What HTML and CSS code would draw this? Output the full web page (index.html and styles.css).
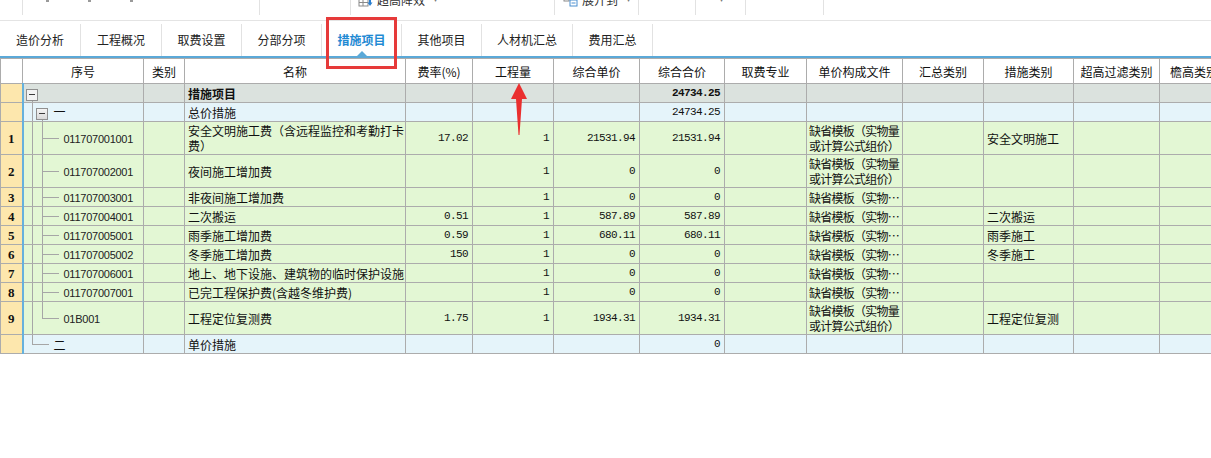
FILE: index.html
```html
<!DOCTYPE html>
<html lang="zh-CN">
<head>
<meta charset="utf-8">
<title>措施项目</title>
<link rel="stylesheet" href="styles.css">
</head>
<body>
<div class="app">
  <div class="toolbar">
    <div class="tb-seg s1"></div>
    <div class="tb-seg s2"><span class="tb-dot d1"></span><span class="tb-dot d2"></span><span class="tb-dot d3"></span></div>
    <div class="tb-seg s3"></div>
    <div class="tb-seg s4">
      <svg class="tb-icon" width="15" height="14" viewBox="0 0 15 14"><rect x="1" y="1" width="9" height="11" fill="#fff" stroke="#8a8a8a"/><path d="M1 5h9M1 8.5h9M5 1v11" stroke="#8a8a8a"/><path d="M12 1v9" stroke="#2a7fd0" stroke-width="2"/><path d="M9.5 8.5l2.5 3.5 2.5-3.5z" fill="#2a7fd0"/></svg>
      <span class="tb-text">超高降效</span><span class="tb-caret">▾</span>
    </div>
    <div class="tb-seg s5">
      <svg class="tb-icon" width="15" height="14" viewBox="0 0 15 14"><rect x="1" y="2" width="5" height="5" fill="#fff" stroke="#8a8a8a"/><rect x="7" y="6" width="7" height="6" fill="#fff" stroke="#4a8fd0"/><path d="M8.5 9h4" stroke="#4a8fd0"/></svg>
      <span class="tb-text">展开到</span><span class="tb-caret">▾</span>
    </div>
    <div class="tb-seg s6"></div>
    <div class="tb-seg s7"><span class="tb-caret">▾</span></div>
    <div class="tb-seg s8"></div>
  </div>

  <div class="tabs">
    <div class="tab t80">造价分析</div>
    <div class="tab t81">工程概况</div>
    <div class="tab t80">取费设置</div>
    <div class="tab t80">分部分项</div>
    <div class="tab t80 active">措施项目</div>
    <div class="tab t80">其他项目</div>
    <div class="tab t91">人材机汇总</div>
    <div class="tab t80">费用汇总</div>
  </div>

  <div class="grid-wrap">
    <table class="grid">
      <colgroup>
        <col class="c-rh"><col class="c-sq"><col class="c-lb"><col class="c-mc"><col class="c-fl"><col class="c-gcl"><col class="c-zhdj"><col class="c-zhhj"><col class="c-qf"><col class="c-djgc"><col class="c-hz"><col class="c-cs"><col class="c-cg"><col class="c-yg">
      </colgroup>
      <thead>
        <tr>
          <th class="rh-head"></th><th>序号</th><th>类别</th><th>名称</th><th>费率(%)</th><th>工程量</th><th>综合单价</th><th>综合合价</th><th>取费专业</th><th>单价构成文件</th><th>汇总类别</th><th>措施类别</th><th>超高过滤类别</th><th class="left">檐高类别</th>
        </tr>
      </thead>
      <tbody>
        <tr class="r-top h1">
          <td class="rh"></td>
          <td class="sq sq-top"><span class="tg tg-light"></span></td>
          <td></td><td class="mc bold">措施项目</td><td></td><td></td><td></td><td class="num bold">24734.25</td><td></td><td></td><td></td><td></td><td></td><td></td>
        </tr>
        <tr class="r-group h1">
          <td class="rh"></td>
          <td class="sq sq-g1"><span class="tg"></span><span class="grp">一</span></td>
          <td></td><td class="mc">总价措施</td><td></td><td></td><td></td><td class="num">24734.25</td><td></td><td></td><td></td><td></td><td></td><td></td>
        </tr>
        <tr class="r-item h2">
          <td class="rh">1</td>
          <td class="sq sq-item"><span class="code">011707001001</span></td>
          <td></td><td class="mc">安全文明施工费（含远程监控和考勤打卡<br>费）</td><td class="num">17.02</td><td class="num">1</td><td class="num">21531.94</td><td class="num">21531.94</td><td></td><td class="dj">缺省模板（实物量<br>或计算公式组价）</td><td></td><td class="mc">安全文明施工</td><td></td><td></td>
        </tr>
        <tr class="r-item h2">
          <td class="rh">2</td>
          <td class="sq sq-item"><span class="code">011707002001</span></td>
          <td></td><td class="mc">夜间施工增加费</td><td></td><td class="num">1</td><td class="num">0</td><td class="num">0</td><td></td><td class="dj">缺省模板（实物量<br>或计算公式组价）</td><td></td><td></td><td></td><td></td>
        </tr>
        <tr class="r-item h1">
          <td class="rh">3</td>
          <td class="sq sq-item"><span class="code">011707003001</span></td>
          <td></td><td class="mc">非夜间施工增加费</td><td></td><td class="num">1</td><td class="num">0</td><td class="num">0</td><td></td><td class="dj">缺省模板（实物…</td><td></td><td></td><td></td><td></td>
        </tr>
        <tr class="r-item h1">
          <td class="rh">4</td>
          <td class="sq sq-item"><span class="code">011707004001</span></td>
          <td></td><td class="mc">二次搬运</td><td class="num">0.51</td><td class="num">1</td><td class="num">587.89</td><td class="num">587.89</td><td></td><td class="dj">缺省模板（实物…</td><td></td><td class="mc">二次搬运</td><td></td><td></td>
        </tr>
        <tr class="r-item h1">
          <td class="rh">5</td>
          <td class="sq sq-item"><span class="code">011707005001</span></td>
          <td></td><td class="mc">雨季施工增加费</td><td class="num">0.59</td><td class="num">1</td><td class="num">680.11</td><td class="num">680.11</td><td></td><td class="dj">缺省模板（实物…</td><td></td><td class="mc">雨季施工</td><td></td><td></td>
        </tr>
        <tr class="r-item h1">
          <td class="rh">6</td>
          <td class="sq sq-item"><span class="code">011707005002</span></td>
          <td></td><td class="mc">冬季施工增加费</td><td class="num">150</td><td class="num">1</td><td class="num">0</td><td class="num">0</td><td></td><td class="dj">缺省模板（实物…</td><td></td><td class="mc">冬季施工</td><td></td><td></td>
        </tr>
        <tr class="r-item h1">
          <td class="rh">7</td>
          <td class="sq sq-item"><span class="code">011707006001</span></td>
          <td></td><td class="mc">地上、地下设施、建筑物的临时保护设施</td><td></td><td class="num">1</td><td class="num">0</td><td class="num">0</td><td></td><td class="dj">缺省模板（实物…</td><td></td><td></td><td></td><td></td>
        </tr>
        <tr class="r-item h1">
          <td class="rh">8</td>
          <td class="sq sq-item"><span class="code">011707007001</span></td>
          <td></td><td class="mc">已完工程保护费(含越冬维护费)</td><td></td><td class="num">1</td><td class="num">0</td><td class="num">0</td><td></td><td class="dj">缺省模板（实物…</td><td></td><td></td><td></td><td></td>
        </tr>
        <tr class="r-item h2">
          <td class="rh">9</td>
          <td class="sq sq-last"><span class="code">01B001</span></td>
          <td></td><td class="mc">工程定位复测费</td><td class="num">1.75</td><td class="num">1</td><td class="num">1934.31</td><td class="num">1934.31</td><td></td><td class="dj">缺省模板（实物量<br>或计算公式组价）</td><td></td><td class="mc">工程定位复测</td><td></td><td></td>
        </tr>
        <tr class="r-group h1">
          <td class="rh"></td>
          <td class="sq sq-g2"><span class="grp">二</span></td>
          <td></td><td class="mc">单价措施</td><td></td><td></td><td></td><td class="num">0</td><td></td><td></td><td></td><td></td><td></td><td></td>
        </tr>
      </tbody>
    </table>
  </div>

  <div class="annot-box"></div>
  <svg class="annot-arrow" width="20" height="54" viewBox="0 0 20 54">
    <path d="M10 0 L18 16 L13 16 L10.5 52 L9.5 52 L7 16 L2 16 Z" fill="#ea2f2f"/>
  </svg>
</div>
</body>
</html>
```

FILE: styles.css
```css
* { box-sizing: border-box; }

html, body {
  margin: 0;
  padding: 0;
  background: #ffffff;
}

body {
  font-family: "Noto Sans CJK SC", "Liberation Sans", sans-serif;
  font-size: 12px;
  color: #000;
}

.app {
  position: relative;
  width: 1211px;
  height: 458px;
  overflow: hidden;
  background: #fff;
}

/* ---------- top toolbar (cut off) ---------- */
.toolbar {
  display: flex;
  height: 21px;
  border-bottom: 1px solid #e4e4e4;
  overflow: hidden;
}

.tb-seg {
  flex: none;
  height: 15px;
  border-right: 1px solid #e2e2e2;
  display: flex;
  align-items: flex-start;
  overflow: hidden;
}

.s1 { width: 23px; }
.s2 { width: 237px; }
.s3 { width: 91px; }
.s4 { width: 204px; padding-left: 7px; }
.s5 { width: 84px; padding-left: 8px; }
.s6 { width: 57px; }
.s7 { width: 50px; padding-left: 15px; }
.s8 { width: 78px; }

.tb-icon {
  flex: none;
  margin-top: -6px;
}

.tb-text {
  margin-top: -8px;
  margin-left: 4px;
  line-height: 16px;
  font-size: 12px;
  color: #333;
}

.tb-caret {
  margin-top: -9px;
  margin-left: 8px;
  line-height: 14px;
  font-size: 10px;
  color: #777;
}

.tb-dot {
  width: 3px;
  height: 2px;
  background: #9a9a9a;
}
.d1 { margin-left: 23px; }
.d2 { margin-left: 39px; }
.d3 { margin-left: 39px; }

/* ---------- tabs ---------- */
.tabs {
  display: flex;
  align-items: flex-end;
  height: 37px;
  border-bottom: 2px solid #5ba9d8;
}

.tab {
  flex: none;
  position: relative;
  height: 32px;
  border-right: 1px solid #e2e2e2;
  display: flex;
  align-items: center;
  justify-content: center;
  font-size: 12px;
  color: #222;
  padding-bottom: 1px;
}

.t80 { width: 80px; }
.t81 { width: 81px; }
.t91 { width: 91px; }
.tabs .tab:first-child { width: 81px; }

.tab.active {
  color: #1f8ad3;
  font-weight: bold;
}

.tab.active::after {
  content: "";
  position: absolute;
  left: 35px;
  bottom: 0;
  width: 0;
  height: 0;
  border-left: 5px solid transparent;
  border-right: 5px solid transparent;
  border-bottom: 5px solid #5ba9d8;
}

/* ---------- grid ---------- */
.grid-wrap {
  width: 1211px;
  overflow: hidden;
}

.grid {
  border-collapse: collapse;
  table-layout: fixed;
  width: 1249px;
}

.c-rh { width: 22px; }
.c-sq { width: 121px; }
.c-lb { width: 41px; }
.c-mc { width: 221px; }
.c-fl { width: 67px; }
.c-gcl { width: 81px; }
.c-zhdj { width: 86px; }
.c-zhhj { width: 85px; }
.c-qf { width: 82px; }
.c-djgc { width: 96px; }
.c-hz { width: 81px; }
.c-cs { width: 90px; }
.c-cg { width: 86px; }
.c-yg { width: 90px; }

.grid th,
.grid td {
  border: 1px solid #acacac;
  padding: 0 3px;
  white-space: nowrap;
  overflow: hidden;
  line-height: 15px;
  vertical-align: middle;
}

.grid th {
  height: 25px;
  font-weight: normal;
  text-align: center;
  background-color: #fff;
  color: #111;
}

.grid th.left { text-align: left; padding-left: 10px; }

.h1 td { height: 19px; }
.h2 td { height: 33px; }

.r-top td { background-color: #dbe2de; }
.r-group td { background-color: #e5f4fa; }
.r-item td { background-color: #e3f7d4; }

.grid td.rh {
  background-color: #fde7ad;
  border-right: 2px solid #66b1dd;
  text-align: center;
  padding: 0;
  font-family: "Liberation Serif", serif;
  font-weight: bold;
  font-size: 13px;
  color: #111;
}

.mc { color: #111; }
.bold { font-weight: bold; }

.grid td.num {
  text-align: right;
  font-family: "Liberation Mono", monospace;
  font-size: 11px;
  letter-spacing: -0.6px;
  padding-right: 4px;
  color: #111;
}

.grid td.dj {
  letter-spacing: -0.75px;
  padding-left: 2px;
  color: #111;
}

.code {
  font-family: "Liberation Sans", sans-serif;
  font-size: 11px;
  letter-spacing: -0.25px;
  color: #222;
}

.grp { margin-left: 6px; color: #111; }

/* tree lines in 序号 column */
.grid td.sq {
  padding: 0;
  background-repeat: no-repeat;
}

.grid td.sq-top {
  padding-left: 2px;
  background-image: linear-gradient(#a6a6a6, #a6a6a6);
  background-position: 8px 100%;
  background-size: 1px 50%;
}

.grid td.sq-g1 {
  padding-left: 12px;
  background-image:
    linear-gradient(#a6a6a6, #a6a6a6),
    linear-gradient(#a6a6a6, #a6a6a6);
  background-position: 8px 0, 18px 100%;
  background-size: 1px 100%, 1px 50%;
}

.grid td.sq-item,
.grid td.sq-last {
  padding-left: 40px;
  background-image:
    linear-gradient(#a6a6a6, #a6a6a6),
    linear-gradient(#a6a6a6, #a6a6a6),
    linear-gradient(#a6a6a6, #a6a6a6);
  background-position: 8px 0, 18px 0, 18px 50%;
  background-size: 1px 100%, 1px 100%, 17px 1px;
}

.grid td.sq-last {
  background-size: 1px 100%, 1px 50%, 17px 1px;
}

.grid td.sq-g2 {
  padding-left: 24px;
  background-image:
    linear-gradient(#a6a6a6, #a6a6a6),
    linear-gradient(#a6a6a6, #a6a6a6);
  background-position: 8px 0, 8px 50%;
  background-size: 1px 50%, 17px 1px;
}

.tg {
  display: inline-block;
  width: 12px;
  height: 12px;
  border: 1px solid #909090;
  vertical-align: middle;
  background:
    linear-gradient(#3c3c3c, #3c3c3c) no-repeat center / 6px 1px,
    linear-gradient(#f4f4f4, #d9d9d9);
}

.tg-light {
  background:
    linear-gradient(#3c3c3c, #3c3c3c) no-repeat center / 6px 1px,
    #f3f3f3;
}

/* ---------- annotations ---------- */
.annot-box {
  position: absolute;
  left: 326px;
  top: 17px;
  width: 71px;
  height: 52px;
  border: 3px solid #e63a3a;
}

.annot-arrow {
  position: absolute;
  left: 509px;
  top: 83px;
}
```
